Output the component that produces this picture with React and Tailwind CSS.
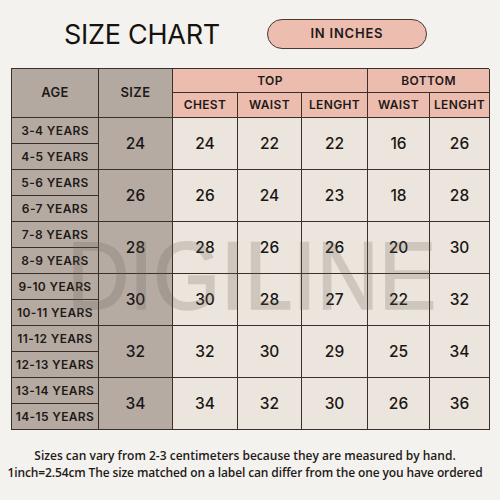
import React from "react";

const rows = [
  ["3-4 YEARS", "4-5 YEARS", "24", "24", "22", "22", "16", "26"],
  ["5-6 YEARS", "6-7 YEARS", "26", "26", "24", "23", "18", "28"],
  ["7-8 YEARS", "8-9 YEARS", "28", "28", "26", "26", "20", "30"],
  ["9-10 YEARS", "10-11 YEARS", "30", "30", "28", "27", "22", "32"],
  ["11-12 YEARS", "12-13 YEARS", "32", "32", "30", "29", "25", "34"],
  ["13-14 YEARS", "14-15 YEARS", "34", "34", "32", "30", "26", "36"],
];

const cell = "border-r border-b border-[#3a2f2b] flex items-center justify-center";
const hdr = "text-[12px] font-semibold tracking-[0.03em] text-[#1e1a18]";
const age = "text-[12px] font-semibold tracking-[0.03em] text-[#1e1a18]";
const num = "text-[15.5px] font-medium text-[#1a1614]";

export default function App() {
  return (
    <div
      className="w-[500px] h-[500px] bg-[#f4f2ee] overflow-hidden"
      style={{ fontFamily: "Inter, 'Liberation Sans', sans-serif" }}
    >
      <div className="h-[68px] flex items-center">
        <div className="ml-[64px] text-[27px] leading-none text-[#151210] tracking-[-0.01em]">
          SIZE CHART
        </div>
        <div className="ml-[47px] w-[160px] h-[30px] rounded-full bg-[#edbdb0] border border-[#4a3a34] flex items-center justify-center text-[13px] font-semibold tracking-[0.06em] text-[#1e1a18]">
          IN INCHES
        </div>
      </div>
      <div className="relative ml-[11px] w-[478px]">
        <div className="grid grid-cols-[87px_74px_65px_64px_66px_62px_60px] grid-rows-[24px_25px_repeat(12,26px)] border-l border-t border-[#3a2f2b]">
          <div className={`${cell} ${hdr} row-span-2 bg-[#b4a9a1] text-[13px]`}>AGE</div>
          <div className={`${cell} ${hdr} row-span-2 bg-[#b4a9a1] text-[13px]`}>SIZE</div>
          <div className={`${cell} ${hdr} col-span-3 bg-[#ecbcaf]`}>TOP</div>
          <div className={`${cell} ${hdr} col-span-2 bg-[#ecbcaf]`}>BOTTOM</div>
          <div className={`${cell} ${hdr} bg-[#ecbcaf]`}>CHEST</div>
          <div className={`${cell} ${hdr} bg-[#ecbcaf]`}>WAIST</div>
          <div className={`${cell} ${hdr} bg-[#ecbcaf]`}>LENGHT</div>
          <div className={`${cell} ${hdr} bg-[#ecbcaf]`}>WAIST</div>
          <div className={`${cell} ${hdr} bg-[#ecbcaf]`}>LENGHT</div>
          {rows.map((r, i) => (
            <React.Fragment key={i}>
              <div className={`${cell} ${age} bg-[#b5aaa2]`}>{r[0]}</div>
              <div className={`${cell} ${num} row-span-2 bg-[#b6aba3]`}>{r[2]}</div>
              {r.slice(3).map((v, j) => (
                <div key={j} className={`${cell} ${num} row-span-2 bg-[#ebe5dd]`}>
                  {v}
                </div>
              ))}
              <div className={`${cell} ${age} bg-[#b5aaa2]`}>{r[1]}</div>
            </React.Fragment>
          ))}
        </div>
        <div
          className="absolute left-[56px] top-[159px] text-[97px] leading-none text-[#6a5f55] opacity-[0.22] [-webkit-text-stroke:1.5px_#6a5f55] origin-left scale-x-[0.89] pointer-events-none select-none whitespace-nowrap"
          style={{ fontFamily: "'Liberation Sans', sans-serif" }}
          aria-hidden="true"
        >
          DIGILINE
        </div>
      </div>
      <div
        className="mt-[17px] pr-[10px] text-center text-[12px] leading-[17px] font-semibold text-[#1e1a18]"
        style={{ fontFamily: "'Open Sans', sans-serif" }}
      >
        <div>Sizes can vary from 2-3 centimeters because they are measured by hand.</div>
        <div className="tracking-[-0.01em]">1inch=2.54cm The size matched on a label can differ from the one you have ordered</div>
      </div>
    </div>
  );
}
